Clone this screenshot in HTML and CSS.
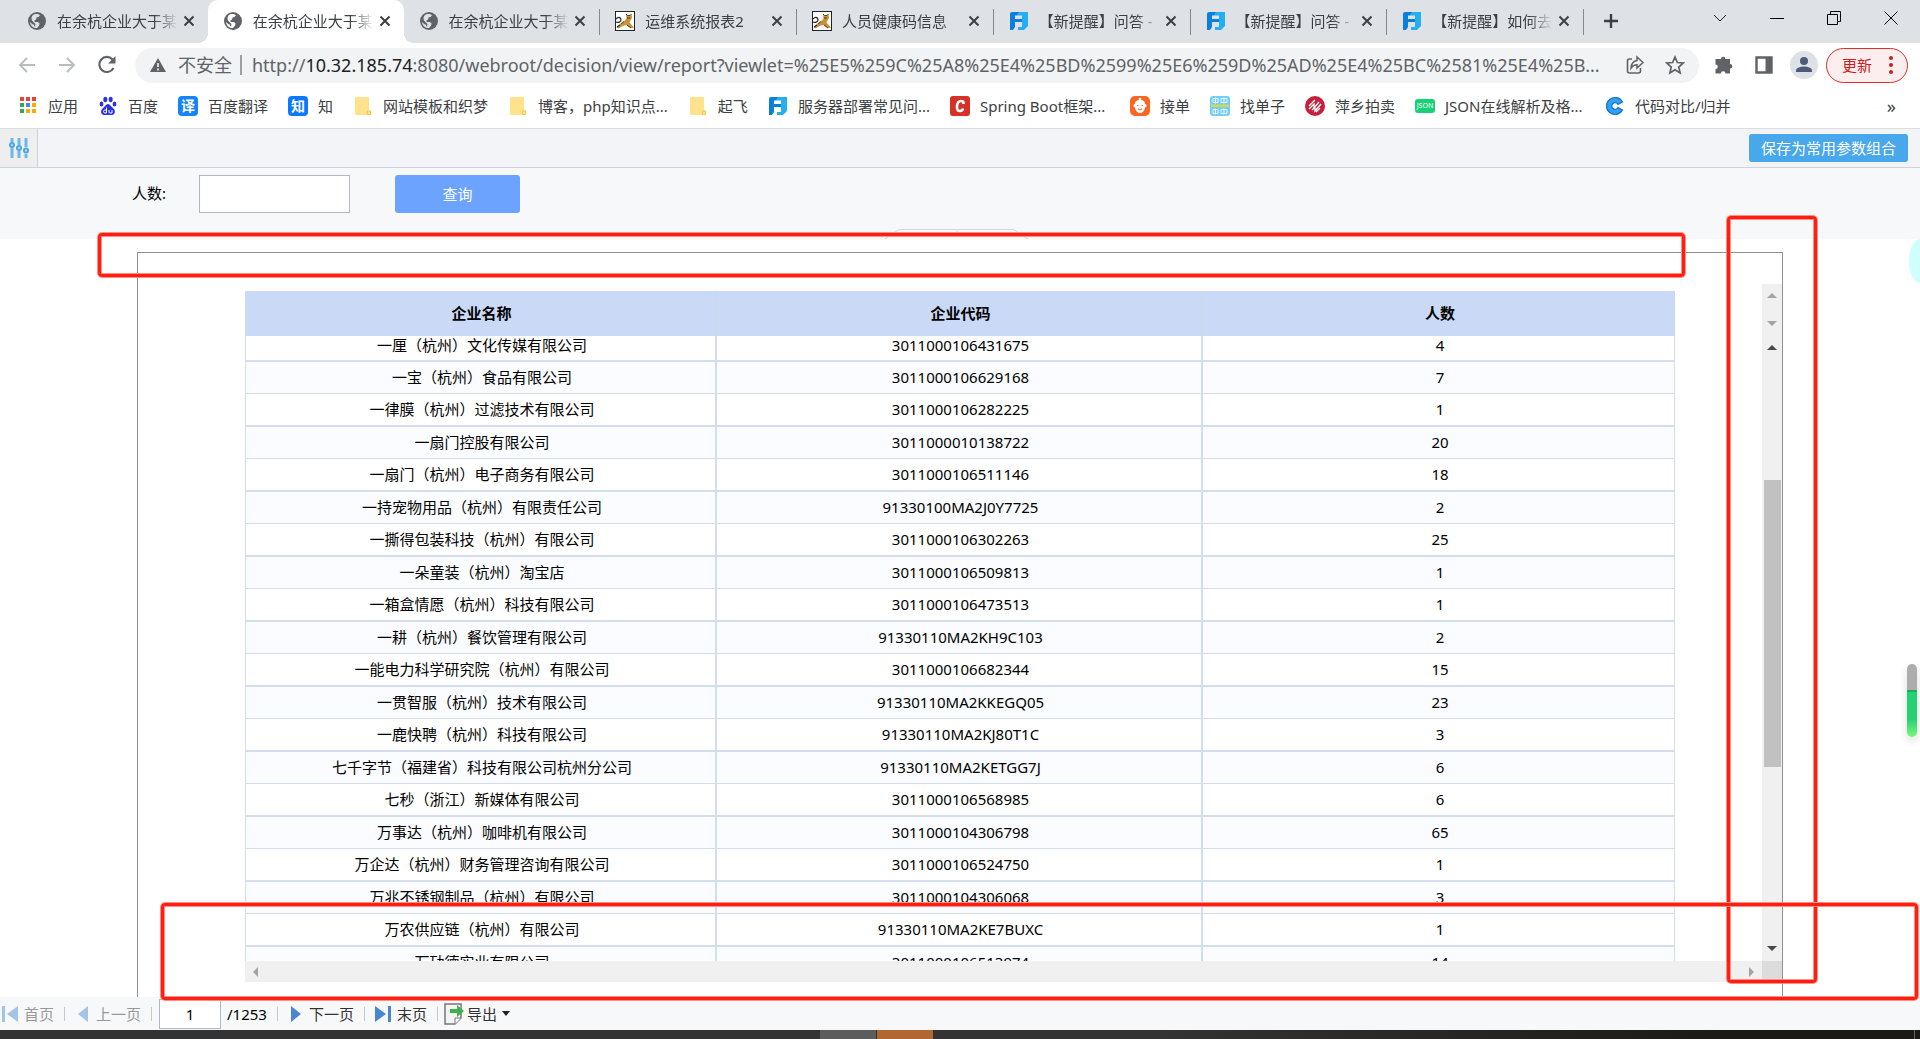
FILE: index.html
```html
<!DOCTYPE html>
<html lang="zh-CN">
<head>
<meta charset="utf-8">
<title>在余杭企业大于某人数</title>
<link rel="stylesheet" href="styles.css">
</head>
<body>
<svg class="defs" width="0" height="0" aria-hidden="true">
  <symbol id="globe" viewBox="0 0 20 20"><circle cx="10" cy="10" r="9" fill="#5f6368"/><path d="M9 3c2 0 3 .4 4 1.200l-1.500 1.800-2 .6-.4 1.800-1.700 1 .2 1.600h3.400l1.600 1.600-.6 2.200-2 2.200c-3.600.5-6.800-2.600-7-6l2.400 2.200 1.500.2.200 1.700 1 .3.300-2.400-3.400-3.400C3.500 5.500 6 3 9 3z" fill="#dee1e6"/></symbol>
  <symbol id="globe-on" viewBox="0 0 20 20"><circle cx="10" cy="10" r="9" fill="#5f6368"/><path d="M9 3c2 0 3 .4 4 1.200l-1.500 1.800-2 .6-.4 1.800-1.700 1 .2 1.600h3.400l1.600 1.600-.6 2.200-2 2.200c-3.600.5-6.800-2.600-7-6l2.400 2.200 1.500.2.200 1.700 1 .3.300-2.400-3.400-3.400C3.500 5.500 6 3 9 3z" fill="#fff"/></symbol>
  <symbol id="cat" viewBox="0 0 20 20"><rect x=".5" y=".5" width="19" height="19" fill="#fff" stroke="#222"/><path d="M11 3l1.500 1.500h2.500L16.500 3l.5 4-1.500 2.500-1 2 4 4.500v1h-3l-4-3-4 1-4 2.500-2-1L6 12l4-2.500 1.500-2z" fill="#c8923c"/><path d="M11 3l1.500 1.500h2.500L16.500 3M6 13l3-2.500M12 14l4 3M12 7h3" stroke="#5b3d10" fill="none"/><path d="M1 8c3-3 5-1 5 1s-3 3-5 2M2 16l3-2" stroke="#222" stroke-width="1.200" fill="none"/></symbol>
  <symbol id="fan" viewBox="0 0 20 20"><path d="M1 3q0-2 2-2h8L8 4.500H6V8h7v3H6v5l-2 3H1z" fill="#0b7fdc"/><path d="M10 1h9v14l-4 4H9v-3h4V4.500H8z" fill="#25aef0"/></symbol>
  <symbol id="x" viewBox="0 0 14 14"><path d="M2.500 2.500l9 9M11.500 2.500l-9 9" stroke="#3c4043" stroke-width="2" fill="none"/></symbol>
  <symbol id="folder" viewBox="0 0 20 20"><path d="M3 1h12q1 0 1 1v12h1.500v4q0 1-1 1H3q-1 0-1-1V2q0-1 1-1z" fill="#ffe38c"/><path d="M14.500 18.500v-3.500h3v3.500z" fill="#ffe38c" stroke="#f0c84e"/></symbol>
  <symbol id="caret" viewBox="0 0 10 6"><path d="M0 6l5-5 5 5z"/></symbol>
</svg>

<header class="browser">
  <div class="strip">
    <ul class="tabs">
      <li class="tab"><svg class="ico"><use href="#globe"/></svg><span class="title">在余杭企业大于某</span><button class="close" aria-label="关闭"><svg><use href="#x"/></svg></button></li>
      <li class="tab tab-on"><svg class="ico"><use href="#globe-on"/></svg><span class="title">在余杭企业大于某</span><button class="close" aria-label="关闭"><svg><use href="#x"/></svg></button></li>
      <li class="tab tab-sep"><svg class="ico"><use href="#globe"/></svg><span class="title">在余杭企业大于某</span><button class="close" aria-label="关闭"><svg><use href="#x"/></svg></button></li>
      <li class="tab tab-sep"><svg class="ico"><use href="#cat"/></svg><span class="title">运维系统报表2</span><button class="close" aria-label="关闭"><svg><use href="#x"/></svg></button></li>
      <li class="tab tab-sep"><svg class="ico"><use href="#cat"/></svg><span class="title">人员健康码信息</span><button class="close" aria-label="关闭"><svg><use href="#x"/></svg></button></li>
      <li class="tab tab-sep"><svg class="ico"><use href="#fan"/></svg><span class="title">【新提醒】问答 -</span><button class="close" aria-label="关闭"><svg><use href="#x"/></svg></button></li>
      <li class="tab tab-sep"><svg class="ico"><use href="#fan"/></svg><span class="title">【新提醒】问答 -</span><button class="close" aria-label="关闭"><svg><use href="#x"/></svg></button></li>
      <li class="tab tab-sep"><svg class="ico"><use href="#fan"/></svg><span class="title">【新提醒】如何去</span><button class="close" aria-label="关闭"><svg><use href="#x"/></svg></button></li>
    </ul>
    <button class="newtab" aria-label="新标签页"><svg viewBox="0 0 16 16"><path d="M8 1v14M1 8h14" stroke="#3c4043" stroke-width="2.400"/></svg></button>
    <div class="winctl">
      <button aria-label="搜索标签页"><svg viewBox="0 0 14 14"><path d="M1 4l6 6 6-6" stroke="#222" fill="none"/></svg></button>
      <button aria-label="最小化"><svg viewBox="0 0 14 14"><path d="M0 7.500h14" stroke="#000"/></svg></button>
      <button aria-label="还原"><svg viewBox="0 0 14 14"><path d="M.5 3.500h10v10H.5zM3.500 3V.5h10v10H11" stroke="#000" fill="none"/></svg></button>
      <button aria-label="关闭窗口"><svg viewBox="0 0 14 14"><path d="M.5.5l13 13M13.500.5l-13 13" stroke="#000" fill="none"/></svg></button>
    </div>
  </div>

  <div class="nav">
    <div class="navbtns">
      <button aria-label="后退"><svg viewBox="0 0 20 20"><path d="M18 10H3M10 3l-7 7 7 7" stroke="#babcbe" stroke-width="2" fill="none"/></svg></button>
      <button aria-label="前进"><svg viewBox="0 0 20 20"><path d="M2 10h15M10 3l7 7-7 7" stroke="#babcbe" stroke-width="2" fill="none"/></svg></button>
      <button aria-label="刷新"><svg viewBox="0 0 20 20"><path d="M16.500 13a7.500 7.500 0 1 1-1-8.500" stroke="#5f6368" stroke-width="2.200" fill="none"/><path d="M18.500 1v7.500H11z" fill="#5f6368"/></svg></button>
    </div>
    <div class="omni">
      <svg class="warn" viewBox="0 0 16 16"><path d="M8 1l8 14H0z" fill="#5f6368"/><path d="M8 6v4M8 11.500v2" stroke="#f1f3f4" stroke-width="1.600"/></svg>
      <span class="unsafe">不安全</span>
      <div class="url" role="textbox" aria-label="地址" contenteditable="true" spellcheck="false">http://<b>10.32.185.74</b>:8080/webroot/decision/view/report?viewlet=%25E5%259C%25A8%25E4%25BD%2599%25E6%259D%25AD%25E4%25BC%2581%25E4%25B...</div>
      <button aria-label="分享"><svg viewBox="0 0 20 20"><path d="M7 4H4.500Q2.500 4 2.500 6v10q0 2 2 2h9q2 0 2-2v-3" stroke="#5f6368" stroke-width="1.600" fill="none"/><path d="M12 2l6 5.500-6 5.500V9.800c-3 0-4.500 1-6 3.200.3-4 2-7 6-7.600z" stroke="#5f6368" stroke-width="1.500" fill="none"/></svg></button>
      <button aria-label="收藏"><svg viewBox="0 0 20 20"><path d="M10 2l2.400 5.500 5.800.5-4.400 4 1.300 6-5.100-3.200L4.900 18l1.300-6-4.400-4 5.800-.5z" stroke="#5f6368" stroke-width="1.700" fill="none"/></svg></button>
    </div>
    <div class="tools">
      <button aria-label="扩展程序"><svg viewBox="0 0 20 20"><path d="M7 4a2.200 2.200 0 0 1 4.400 0H16v5a2.300 2.300 0 0 1 0 4.600V18.500h-4.500a2.300 2.300 0 0 0-4.600 0H1.500V14a2.300 2.300 0 0 0 0-4.600V4z" fill="#5f6368"/></svg></button>
      <button aria-label="侧边栏"><svg viewBox="0 0 20 20"><path d="M2.500 2.500h15v15h-15z" stroke="#5f6368" stroke-width="2.400" fill="#fff"/><path d="M11.500 2h6v16h-6z" fill="#5f6368"/></svg></button>
      <button class="avatar" aria-label="用户"><svg viewBox="0 0 28 28"><circle cx="14" cy="14" r="14" fill="#dee1e6"/><circle cx="14" cy="10" r="4" fill="#4d5b78"/><path d="M6 21v-1.500c0-3 5-4 8-4s8 1 8 4V21z" fill="#4d5b78"/></svg></button>
      <button class="update">更新<svg viewBox="0 0 4 18"><circle cx="2" cy="2" r="2"/><circle cx="2" cy="9" r="2"/><circle cx="2" cy="16" r="2"/></svg></button>
    </div>
  </div>

  <nav class="marks">
    <a href="#"><svg class="ico" viewBox="0 0 20 20"><path d="M2 1h4v4H2zM8 1h4v4H8zM14 1h4v4h-4z" fill="#ea4335"/><path d="M2 7h4v4H2zM2 13h4v4H2z" fill="#34a853"/><path d="M8 7h4v4H8z" fill="#4285f4"/><path d="M14 7h4v4h-4zM14 13h4v4h-4zM8 13h4v4H8z" fill="#fbab05"/></svg>应用</a>
    <a href="#"><svg class="ico" viewBox="0 0 20 20" fill="#2932e1"><ellipse cx="7.300" cy="3.500" rx="2" ry="2.800"/><ellipse cx="12.700" cy="3.500" rx="2" ry="2.800"/><ellipse cx="3.500" cy="8" rx="1.900" ry="2.600"/><ellipse cx="16.500" cy="8" rx="1.900" ry="2.600"/><path d="M10 8c2 0 3.500 3 5.500 4.500 2.500 2.500 1.500 6.500-1.500 6.500H6c-3 0-4-4-1.500-6.500C6.500 11 8 8 10 8z"/><path d="M8.500 11.500v5.500H7q-1.500 0-1.500-1.500T7 14h1.500M11 14v2q0 1 1 1h2v-3" stroke="#fff" fill="none"/></svg>百度</a>
    <a href="#"><span class="ico badge">译</span>百度翻译</a>
    <a href="#"><span class="ico badge badge-zhi">知</span>知</a>
    <a href="#"><svg class="ico"><use href="#folder"/></svg>网站模板和织梦</a>
    <a href="#"><svg class="ico"><use href="#folder"/></svg>博客，php知识点...</a>
    <a href="#"><svg class="ico"><use href="#folder"/></svg>起飞</a>
    <a href="#"><svg class="ico"><use href="#fan"/></svg>服务器部署常见问...</a>
    <a href="#" class="wide"><svg class="ico" viewBox="0 0 20 20"><rect width="20" height="20" rx="3" fill="#d63027"/><path d="M13.500 8V7q0-2-2.500-2-3.500 0-4 5t3 5q2.500 0 3-2.500" stroke="#fff" stroke-width="2.600" fill="none"/></svg>Spring Boot框架...</a>
    <a href="#"><svg class="ico" viewBox="0 0 20 20"><rect width="20" height="20" rx="5" fill="#fb6522"/><path d="M10 4c4 0 5 2 5 4 2 0 2 3 0 3.500C14.500 15 12.500 17 10 17s-4.500-2-5-5.500C3 11 3 8 5 8c0-2 1-4 5-4z" fill="#fff"/><path d="M10 4V2M7 9.500h1.500M11.500 9.500H13M8 13q2 1.500 4 0" stroke="#fb6522" fill="none"/><circle cx="10" cy="3" r="1.300" fill="#fff"/></svg>接单</a>
    <a href="#"><svg class="ico" viewBox="0 0 20 20"><rect width="20" height="20" rx="3" fill="#72cdf8"/><path d="M3 2.500h5v4H3zM11 2.500h6v4h-6zM3 13.500h5v4H3zM11 13.500h6v4h-6z" stroke="#e8f8ff" fill="none"/><path d="M5.500 1.500v6M14 1.500v6M5.500 12.500v6M14 12.500v6" stroke="#e8f8ff"/><path d="M1 8.500h18v2.500H1z" fill="#d7d94c"/></svg>找单子</a>
    <a href="#"><svg class="ico" viewBox="0 0 20 20"><circle cx="10" cy="10" r="10" fill="#c7203c"/><path d="M4 10l6-6M4 13l5-5v4l5-6M7 14l3-3v4l6-7M11 16l4-4" stroke="#fff" stroke-width="1.300" fill="none"/></svg>萍乡拍卖</a>
    <a href="#" class="wider"><span class="ico badge-json">JSON</span>JSON在线解析及格...</a>
    <a href="#"><svg class="ico" viewBox="0 0 20 20"><path d="M17.500 6A8.500 8.500 0 1 0 17.500 14L13 11.500a3.300 3.300 0 1 1 0-3z" fill="#31a0f5" stroke="#1272c4" stroke-width="1.200"/></svg>代码对比/归并</a>
    <button class="more" aria-label="更多书签">»</button>
  </nav>
</header>

<main class="page">
  <div class="parambar">
    <button class="params" aria-label="参数"><svg viewBox="0 0 20 20"><path d="M3 0v4M3 10v10M10 0v7M10 13v7M17 0v9M17 16v4" stroke="#6db8ea" stroke-width="3"/><g fill="#a9d6f4" stroke="#4aa5e2" stroke-width="1.800"><circle cx="3" cy="7" r="2.100"/><circle cx="10" cy="10" r="2.100"/><circle cx="17" cy="12.500" r="2.100"/></g></svg></button>
    <button class="save">保存为常用参数组合</button>
  </div>
  <form class="filter" onsubmit="return false">
    <label for="num">人数:</label>
    <input id="num" type="text">
    <button class="query">查询</button>
    <svg class="handle" viewBox="0 0 143 10"><path d="M0 9.500h1L14 .5h115l13 9h1" fill="#fafafb" stroke="#d6d6da"/><path d="M68 6l4-4 4 4z" fill="#ccc"/></svg>
  </form>

  <section class="sheet">
    <div class="viewport">
      <table>
        <colgroup><col class="side"><col class="mid"><col class="side"></colgroup>
        <thead><tr><th>企业名称</th><th>企业代码</th><th>人数</th></tr></thead>
        <tbody>
          <tr><td>一厘（杭州）文化传媒有限公司</td><td>3011000106431675</td><td>4</td></tr>
          <tr><td>一宝（杭州）食品有限公司</td><td>3011000106629168</td><td>7</td></tr>
          <tr><td>一律膜（杭州）过滤技术有限公司</td><td>3011000106282225</td><td>1</td></tr>
          <tr><td>一扇门控股有限公司</td><td>3011000010138722</td><td>20</td></tr>
          <tr><td>一扇门（杭州）电子商务有限公司</td><td>3011000106511146</td><td>18</td></tr>
          <tr><td>一持宠物用品（杭州）有限责任公司</td><td>91330100MA2J0Y7725</td><td>2</td></tr>
          <tr><td>一撕得包装科技（杭州）有限公司</td><td>3011000106302263</td><td>25</td></tr>
          <tr><td>一朵童装（杭州）淘宝店</td><td>3011000106509813</td><td>1</td></tr>
          <tr><td>一箱盒情愿（杭州）科技有限公司</td><td>3011000106473513</td><td>1</td></tr>
          <tr><td>一耕（杭州）餐饮管理有限公司</td><td>91330110MA2KH9C103</td><td>2</td></tr>
          <tr><td>一能电力科学研究院（杭州）有限公司</td><td>3011000106682344</td><td>15</td></tr>
          <tr><td>一贯智服（杭州）技术有限公司</td><td>91330110MA2KKEGQ05</td><td>23</td></tr>
          <tr><td>一鹿快聘（杭州）科技有限公司</td><td>91330110MA2KJ80T1C</td><td>3</td></tr>
          <tr><td>七千字节（福建省）科技有限公司杭州分公司</td><td>91330110MA2KETGG7J</td><td>6</td></tr>
          <tr><td>七秒（浙江）新媒体有限公司</td><td>3011000106568985</td><td>6</td></tr>
          <tr><td>万事达（杭州）咖啡机有限公司</td><td>3011000104306798</td><td>65</td></tr>
          <tr><td>万企达（杭州）财务管理咨询有限公司</td><td>3011000106524750</td><td>1</td></tr>
          <tr><td>万兆不锈钢制品（杭州）有限公司</td><td>3011000104306068</td><td>3</td></tr>
          <tr><td>万农供应链（杭州）有限公司</td><td>91330110MA2KE7BUXC</td><td>1</td></tr>
          <tr><td>万劢德实业有限公司</td><td>3011000106513974</td><td>14</td></tr>
        </tbody>
      </table>
    </div>
    <div class="vbar">
      <svg class="off"><use href="#caret"/></svg>
      <svg class="off down"><use href="#caret"/></svg>
      <svg><use href="#caret"/></svg>
      <div class="track"><div class="thumb"></div></div>
      <svg class="down"><use href="#caret"/></svg>
    </div>
    <div class="hbar">
      <svg viewBox="0 0 5 10"><path d="M5 0v10L0 5z"/></svg>
      <svg viewBox="0 0 5 10"><path d="M0 0v10l5-5z"/></svg>
    </div>
    <div class="corner"></div>
  </section>

  <footer class="pager">
    <button class="first" disabled><svg width="16" height="18" viewBox="0 0 16 18"><path d="M0 1h3v16H0zM16 1v16L5 9z" fill="#a4c3e6"/></svg>首页</button>
    <i></i>
    <button class="prev" disabled><svg width="10" height="16" viewBox="0 0 10 16"><path d="M10 0v16L0 8z" fill="#a4c3e6"/></svg>上一页</button>
    <i></i>
    <input type="text" value="1" aria-label="页码">
    <span class="total">/1253</span>
    <i></i>
    <button class="next"><svg width="10" height="16" viewBox="0 0 10 16"><path d="M0 0v16l10-8z" fill="#4a86cf"/></svg>下一页</button>
    <i></i>
    <button class="last"><svg width="16" height="18" viewBox="0 0 16 18"><path d="M13 1h3v16h-3zM0 1v16l11-8z" fill="#4a86cf"/></svg>末页</button>
    <i></i>
    <button class="export"><svg width="20" height="22" viewBox="0 0 20 22"><path d="M1 1h16v14l-6 6H1z" fill="#f4f4f4" stroke="#777" stroke-width="1.500"/><path d="M17 15h-6v6" fill="#fff" stroke="#777"/><path d="M6 6h7V2l7 6-7 6v-4H6z" fill="#3fae4e"/></svg>导出<svg class="drop" width="8" height="5" viewBox="0 0 8 5"><path d="M0 0h8L4 5z" fill="#222"/></svg></button>
  </footer>

  <div class="mark mark-top"></div>
  <div class="mark mark-right"></div>
  <div class="mark mark-bottom"></div>
  <div class="bubble"></div>
  <div class="meter"></div>
</main>

<div class="taskbar"><span class="task"></span><span class="task task-hot"></span><span class="clock"></span></div>
</body>
</html>
```
FILE: styles.css
```css
* { box-sizing: border-box; }
body {
  margin: 0;
  height: 100vh;
  display: flex;
  flex-direction: column;
  overflow: hidden;
  background: #fff;
  color: #000;
  font: 15px/20px "Noto Sans", "Noto Sans CJK SC", sans-serif;
}
button { border: 0; padding: 0; background: none; font: inherit; color: inherit; white-space: nowrap; }
input { font: inherit; }
svg { display: block; flex: none; }
.defs { position: absolute; }
.ico { width: 20px; height: 20px; flex: none; }

/* Browser frame */
.browser { border-bottom: 1px solid #dadce0; color: #3c4043; }
.strip { display: flex; height: 43px; padding-left: 12px; background: #dee1e6; }
.tabs { display: flex; flex: 0 1 1572px; min-width: 0; margin: 0; padding: 0; list-style: none; }
.tab {
  position: relative;
  display: flex;
  flex: 1;
  min-width: 0;
  align-items: center;
  gap: 10px;
  padding: 0 12px 2px 15px;
}
.tab-sep { border-right: 1px solid #85888c; border-image: linear-gradient(transparent 10px, #85888c 10px 34px, transparent 34px) 1; }
.tab-on { background: #fff; border-radius: 10px 10px 0 0; }
.tab-on::before, .tab-on::after { content: ""; position: absolute; bottom: 0; width: 10px; height: 10px; }
.tab-on::before { left: -10px; background: radial-gradient(circle at 0 0, transparent 10px, #fff 10px); }
.tab-on::after { right: -10px; background: radial-gradient(circle at 100% 0, transparent 10px, #fff 10px); }
.title {
  flex: 1;
  margin-right: -6px;
  overflow: hidden;
  white-space: nowrap;
  mask-image: linear-gradient(to left, transparent, #000 24px);
}
.close svg { width: 14px; height: 14px; }
.newtab { margin-left: 19px; padding-bottom: 2px; }
.newtab svg { width: 16px; height: 16px; }
.winctl { display: flex; height: 36px; margin-left: auto; padding-right: 1px; }
.winctl button { width: 57px; display: flex; align-items: center; justify-content: center; }
.winctl svg { width: 14px; height: 14px; }

.nav { display: flex; align-items: center; height: 44px; padding: 0 12px 0 17px; }
.navbtns { display: flex; gap: 20px; width: 118px; }
.navbtns svg { width: 20px; height: 20px; }
.omni {
  display: flex;
  flex: 1;
  min-width: 0;
  align-items: center;
  height: 35px;
  padding: 0 14px 0 15px;
  border-radius: 18px;
  background: #f1f3f4;
  color: #5f6368;
  font-size: 18px;
}
.omni svg { width: 20px; height: 20px; }
.omni button { margin-left: 20px; }
.omni .warn { width: 16px; height: 16px; margin-right: 12px; }
.unsafe { padding-right: 8px; border-right: 2px solid #9aa0a6; white-space: nowrap; }
.url { flex: 1; min-width: 0; margin-left: 10px; overflow: hidden; white-space: nowrap; line-height: 24px; }
.url b { font-weight: 400; color: #202124; }
.tools { display: flex; align-items: center; gap: 20px; margin-left: 15px; }
.tools svg { width: 20px; height: 20px; }
.tools .avatar svg { width: 28px; height: 28px; }
.avatar { margin-left: -4px; }
.tools .update {
  display: flex;
  align-items: center;
  gap: 17px;
  height: 35px;
  margin-left: -12px;
  padding: 0 14px 0 15px;
  border: 1px solid #d93025;
  border-radius: 18px;
  background: #fceeee;
  color: #c5221f;
}
.tools .update svg { width: 4px; height: 18px; fill: #c5221f; }

.marks { display: flex; align-items: center; gap: 20px; height: 41px; padding: 0 24px 4px 18px; }
.marks a { display: flex; align-items: center; gap: 10px; color: inherit; text-decoration: none; white-space: nowrap; }
.marks .wide { width: 160px; }
.marks .wider { width: 170px; }
.badge { border-radius: 4px; background: #1484f8; color: #fff; font-size: 14px; font-weight: 700; text-align: center; }
.badge-zhi { background: #0a78ff; }
.badge-json { height: 14px; border-radius: 3px; background: #16d176; color: #fff; font-size: 7px; line-height: 14px; text-align: center; }
.more { margin-left: auto; font-size: 18px; }

/* Report page */
.page { position: relative; display: flex; flex: 1; min-height: 0; flex-direction: column; }
.parambar { display: flex; align-items: center; justify-content: space-between; height: 39px; padding-right: 12px; border-bottom: 1px solid #d0d2da; background: #f3f4f8; }
.params { align-self: stretch; padding: 0 8px 0 9px; border-right: 1px solid #d0d2da; background: #eee; }
.params svg { width: 20px; height: 20px; }
.save { height: 28px; padding: 0 12px; border-radius: 3px; background: #48a8eb; color: #fff; }
.filter { position: relative; display: flex; height: 71px; padding: 7px 132px; background: #f7f8fa; }
.filter label { width: 67px; line-height: 36px; }
.filter input { width: 151px; height: 38px; border: 1px solid #b4b6c8; background: #fff; }
.query { width: 125px; height: 38px; margin-left: 45px; border-radius: 3px; background: #6ba3ff; color: #fff; }
.handle { position: absolute; bottom: 0; left: calc(50% - 75px); width: 143px; height: 10px; }

.sheet {
  display: grid;
  grid-template: minmax(0, 1fr) 21px / minmax(0, 1fr) 20px;
  flex: 1;
  min-height: 0;
  margin: 13px 137px 0;
  padding: 31px 0 15px 107px;
  border: 1px solid #909090;
  border-bottom: 0;
}
.viewport { margin: 7px 87px 0 0; overflow: hidden; }
table { width: 100%; table-layout: fixed; border-spacing: 0; text-align: center; }
.side { width: 33%; }
.mid { width: 34%; }
th { height: 45px; padding: 0 0 2px 3px; background: #c9d9f6; border-right: 2px solid #cbd9f0; }
td { height: 33px; padding: 0 0 2px 3px; border: 0 solid #d3deec; border-right-width: 2px; border-bottom-width: 2px; white-space: nowrap; }
td:first-child { border-left-width: 1px; }
th:last-child, td:last-child { border-right-width: 1px; }
tr:nth-child(even) td { height: 32px; border-bottom-width: 1px; background: #fafcff; }
tbody tr:first-child td { height: 26px; padding-bottom: 6px; line-height: 18px; }

.vbar { display: flex; flex-direction: column; align-items: center; padding: 8px 0 9px; background: #f0f0f0; }
.vbar svg { width: 10px; height: 6px; fill: #484848; }
.vbar .off { fill: #a3a3a3; }
.vbar .down { transform: rotate(180deg); }
.vbar svg:nth-child(2) { margin: 23px 0 17px; }
.track { display: flex; flex: 1; flex-direction: column; align-self: stretch; padding: 130px 1px 179px 2px; }
.thumb { flex: 1; background: #c1c1c1; }
.hbar { display: flex; align-items: center; justify-content: space-between; padding: 0 8px; background: #f0f0f0; }
.hbar svg { width: 5px; height: 10px; fill: #a3a3a3; }
.corner { background: #dcdcdc; }

.pager { display: flex; align-items: center; height: 33px; padding-left: 2px; background: #f7f8fa; color: #333; }
.pager button { display: flex; align-items: center; gap: 6px; }
.pager button:disabled { color: #999; }
.pager i { width: 1px; height: 14px; margin: 0 10px; background: #c8c8cc; }
.pager .prev, .pager .next { gap: 8px; margin: 0 0 0 3px; }
.pager input { width: 62px; height: 30px; margin-right: 6px; margin-left: -3px; border: 1px solid #b4b6c8; background: #fff; text-align: center; }
.total { color: #000; }
.pager .export { gap: 3px; margin-left: -4px; }
.pager .drop { margin-left: 2px; }

/* Highlight frames drawn over the page */
.mark { position: absolute; border: 3px solid #ff1f10; border-radius: 4px; box-shadow: 0 0 0 1px #ff8f88, inset 0 0 0 1px #ff8f88; }
.mark-top { top: 104px; right: 235px; left: 98px; height: 44px; }
.mark-right { top: 87px; right: 103px; bottom: 47px; width: 90px; }
.mark-bottom { right: 2px; bottom: 30px; left: 161px; height: 97px; }
.bubble { position: absolute; top: 110px; right: 0; width: 11px; height: 44px; border-radius: 11px 0 0 11px / 22px 0 0 22px; background: #cffffa; }
.meter {
  position: absolute;
  right: 3px;
  bottom: 293px;
  width: 10px;
  height: 73px;
  border-radius: 5px;
  background: linear-gradient(#adadad 26px, #1fae5c 26px 28px, #25d170 28px 55px, #7df57d);
  box-shadow: 0 4px 8px #0002;
}

.taskbar { display: flex; gap: 1px; height: 9px; padding: 0 5px 0 820px; background: linear-gradient(90deg, #333 60%, #1c1a16 90%); }
.task { width: 56px; background: #5c5c5c; }
.task-hot { background: #b06830; }
.clock { width: 1px; margin-left: auto; background: #666; }
```
